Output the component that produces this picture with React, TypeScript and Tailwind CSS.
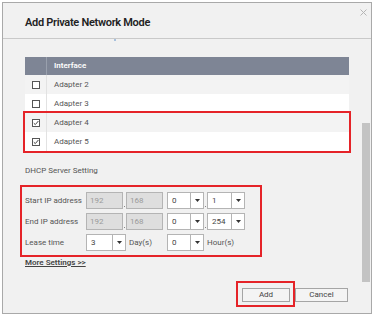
const font = { fontFamily: "Roboto, 'Liberation Sans', sans-serif" };

type Row = { name: string; checked: boolean };

const rows: Row[] = [
  { name: "Adapter 2", checked: false },
  { name: "Adapter 3", checked: false },
  { name: "Adapter 4", checked: true },
  { name: "Adapter 5", checked: true },
];

function Checkbox({ checked }: { checked: boolean }) {
  return (
    <svg width="8" height="8" viewBox="0 0 8 8">
      <rect x="0.5" y="0.5" width="7" height="7" fill="white" stroke="#555" />
      {checked && (
        <path d="M1.8 4.2 L3.3 5.6 L6.4 2" fill="none" stroke="#444" strokeWidth="1" />
      )}
    </svg>
  );
}

function TableRow({ row, striped }: { row: Row; striped: boolean }) {
  return (
    <div className={`flex h-[19px] items-center ${striped ? "bg-[#f3f3f3]" : "bg-white"}`}>
      <div className="flex h-full w-[22px] items-center justify-center border-r border-[#e2e2e2]">
        <Checkbox checked={row.checked} />
      </div>
      <div className="pl-[7px] text-[8px] text-[#555]">{row.name}</div>
    </div>
  );
}

function Box({ value, w = "w-[37px]" }: { value: string; w?: string }) {
  return (
    <div
      className={`flex h-[17px] ${w} items-center border border-[#b4b4b4] bg-[#dedede] pl-[3px] text-[8px] text-[#9a9a9a]`}
    >
      {value}
    </div>
  );
}

function Select({ value, w = "w-[38px]" }: { value: string; w?: string }) {
  return (
    <div className={`flex h-[17px] ${w} items-center border border-[#b4b4b4] bg-white text-[8px] text-[#444]`}>
      <div className="flex-1 pl-[4px]">{value}</div>
      <div className="flex h-full w-[13px] items-center justify-center border-l border-[#b4b4b4]">
        <svg width="5" height="3" viewBox="0 0 5 3">
          <path d="M0 0 H5 L2.5 3 Z" fill="#333" />
        </svg>
      </div>
    </div>
  );
}

function Dot() {
  return (
    <div className="flex h-[17px] w-[3px] items-end justify-center pb-[2px]">
      <div className="h-[1px] w-[1px] bg-[#888]" />
    </div>
  );
}

function Label({ text }: { text: string }) {
  return <div className="w-[61px] text-[8px] text-[#555]">{text}</div>;
}

export default function App() {
  return (
    <div className="h-[317px] w-[374px] overflow-hidden bg-white pl-[2px] pt-[2px]" style={font}>
      <div className="flex h-[312px] w-[370px] flex-col border border-[#a9a9a9] bg-[#f1f1f1]">
        <div className="flex h-[36px] shrink-0 items-start justify-between border-b border-[#c9c9c9]">
          <div className="pl-[22px] pt-[13px] text-[11px] font-semibold leading-[14px] tracking-[-0.3px] text-[#222]">
            Add Private Network Mode
          </div>
          <svg className="mr-[4px] mt-[6px]" width="7" height="7" viewBox="0 0 7 7">
            <path d="M0.5 0.5 L6.5 6.5 M6.5 0.5 L0.5 6.5" stroke="#b5b5b5" strokeWidth="1" />
          </svg>
        </div>

        <div className="flex flex-1">
          <div className="flex-1 pl-[22px]">
            <div className="ml-[89px] h-[2px] w-[2px] rounded-full bg-[#8fb0d6]" />
            <div className="mt-[16px] w-[324px]">
              <div className="flex h-[18px] items-center bg-[#7e8595]">
                <div className="h-full w-[22px] border-r border-[#99a0ad]" />
                <div className="pl-[7px] text-[8px] font-semibold text-white">Interface</div>
              </div>
              <TableRow row={rows[0]} striped />
              <TableRow row={rows[1]} striped={false} />
              <div className="outline-2 outline-[#e52328]">
                <TableRow row={rows[2]} striped />
                <TableRow row={rows[3]} striped={false} />
              </div>
            </div>

            <div className="mt-[15px] text-[8px] leading-[10px] text-[#555]">DHCP Server Setting</div>

            <div className="-ml-[5px] mt-[9px] flex w-[242px] flex-col gap-[4px] border-2 border-[#e52328] pb-[4px] pl-[3px] pt-[5px]">
              <div className="flex items-center">
                <Label text="Start IP address" />
                <Box value="192" />
                <Dot />
                <Box value="168" />
                <div className="w-[4px]" />
                <Select value="0" w="w-[37px]" />
                <Dot />
                <Select value="1" />
              </div>
              <div className="flex items-center">
                <Label text="End IP address" />
                <Box value="192" />
                <Dot />
                <Box value="168" />
                <div className="w-[4px]" />
                <Select value="0" w="w-[37px]" />
                <Dot />
                <Select value="254" />
              </div>
              <div className="flex items-center">
                <Label text="Lease time" />
                <Select value="3" w="w-[40px]" />
                <div className="w-[41px] pl-[3px] text-[8px] text-[#555]">Day(s)</div>
                <Select value="0" w="w-[37px]" />
                <div className="pl-[3px] text-[8px] text-[#555]">Hour(s)</div>
              </div>
            </div>

            <div className="mt-[1px] text-[8px] font-semibold leading-[10px] text-[#444] underline">
              More Settings &gt;&gt;
            </div>

            <div className="mt-[13px] flex items-start">
              <div className="ml-[211px] flex border-2 border-[#e52328] pb-[3px] pl-[4px] pr-[3px] pt-[5px]">
                <button className="flex h-[14px] w-[48px] items-center justify-center border border-[#a5a5a5] bg-[#f4f4f4] text-[8px] text-[#444]">
                  Add
                </button>
              </div>
              <button className="mt-[7px] flex h-[14px] w-[53px] items-center justify-center border border-[#a5a5a5] bg-[#f4f4f4] text-[8px] text-[#444]">
                Cancel
              </button>
            </div>
          </div>

          <div className="mr-[1px] w-[8px] pt-[84px]">
            <div className="h-[159px] w-[8px] bg-[#c3c3c3]" />
          </div>
        </div>
      </div>
    </div>
  );
}
